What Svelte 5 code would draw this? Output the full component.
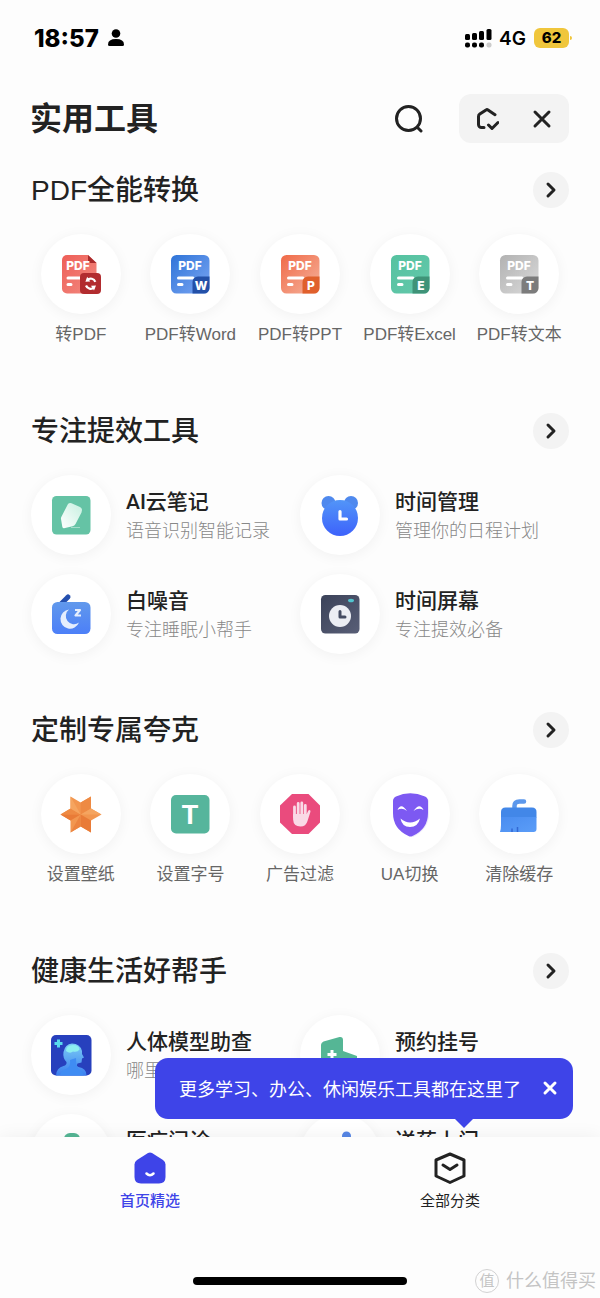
<script lang="ts">
  type Tool = { icon: string; name: string; desc?: string };
  type Section = { title: string; layout: "grid" | "list"; tools: Tool[] };

  const sections: Section[] = [
    {
      title: "PDF全能转换",
      layout: "grid",
      tools: [
        { icon: "pdf", name: "转PDF" },
        { icon: "word", name: "PDF转Word" },
        { icon: "ppt", name: "PDF转PPT" },
        { icon: "excel", name: "PDF转Excel" },
        { icon: "txt", name: "PDF转文本" },
      ],
    },
    {
      title: "专注提效工具",
      layout: "list",
      tools: [
        { icon: "note", name: "AI云笔记", desc: "语音识别智能记录" },
        { icon: "bear", name: "时间管理", desc: "管理你的日程计划" },
        { icon: "noise", name: "白噪音", desc: "专注睡眠小帮手" },
        { icon: "screen", name: "时间屏幕", desc: "专注提效必备" },
      ],
    },
    {
      title: "定制专属夸克",
      layout: "grid",
      tools: [
        { icon: "star", name: "设置壁纸" },
        { icon: "font", name: "设置字号" },
        { icon: "stop", name: "广告过滤" },
        { icon: "mask", name: "UA切换" },
        { icon: "broom", name: "清除缓存" },
      ],
    },
    {
      title: "健康生活好帮手",
      layout: "list",
      tools: [
        { icon: "body", name: "人体模型助查", desc: "哪里" },
        { icon: "clinic", name: "预约挂号" },
        { icon: "doctor", name: "医疗问诊" },
        { icon: "delivery", name: "送药上门" },
      ],
    },
  ];

  // from / to: page gradient, badge: corner colour
  const docs: Record<string, { from: string; to: string; badge: string; letter: string }> = {
    word: { from: "#2f74d8", to: "#7ba6f3", badge: "#2350a8", letter: "W" },
    ppt: { from: "#f06a48", to: "#f5b39c", badge: "#e0602c", letter: "P" },
    excel: { from: "#55c2a0", to: "#64c8ab", badge: "#3f9378", letter: "E" },
    txt: { from: "#b2b2b2", to: "#dadada", badge: "#7c7c7c", letter: "T" },
  };

  let tipOpen = true;
</script>

{#snippet glyph(name: string)}
  <svg class="glyph" viewBox="0 0 40 40" aria-hidden="true">
    {#if docs[name]}
      {@const doc = docs[name]}
      <linearGradient id={`g-${name}`} x1="0" y1="0" x2="1" y2="1">
        <stop offset="0" stop-color={doc.from} />
        <stop offset="1" stop-color={doc.to} />
      </linearGradient>
      <rect x="1" y="1" width="38.5" height="38.5" rx="5.5" fill={`url(#g-${name})`} />
      <text class="doc-text" x="20" y="16">PDF</text>
      <path d="M8.5 24H23M8.500 30.5h3.5" stroke="#fff" stroke-width="3" stroke-linecap="round" />
      <path d="M28 22.5h11.5V34a5.5 5.5 0 0 1-5.5 5.5H22.5V28a5.5 5.5 0 0 1 5.5-5.5z" fill={doc.badge} />
      <text class="doc-letter" x="31" y="35.5">{doc.letter}</text>
    {:else if name === "pdf"}
      <linearGradient id="g-pdf" x1="0" y1="0" x2="1" y2="1">
        <stop offset="0" stop-color="#ee5f58" />
        <stop offset="1" stop-color="#f28a80" />
      </linearGradient>
      <path d="M6 1h21l8.5 8v30.5H6a5 5 0 0 1-5-5V6a5 5 0 0 1 5-5z" fill="url(#g-pdf)" />
      <path d="M27 1v5.5a2.5 2.5 0 0 0 2.5 2.5h6z" fill="#a82a2c" />
      <text class="doc-text" x="17" y="16">PDF</text>
      <path d="M7 24h12M7 30.5h3" stroke="#fff" stroke-width="3" stroke-linecap="round" />
      <rect x="19" y="19" width="21" height="21" rx="4" fill="#b22c2f" />
      <path d="M25 31.5a5 5 0 0 0 8 2M34.3 27.8a5 5 0 0 0-8-2" fill="none" stroke="#fff" stroke-width="2.2" />
      <path d="M26.2 22.8l-1.8 5 4.800-.2zM33 36.500l2-5-5 .2z" fill="#fff" />
    {:else if name === "note"}
      <linearGradient id="g-note" x1="0" y1="1" x2="1" y2="0">
        <stop offset="0" stop-color="#fff" />
        <stop offset="1" stop-color="#c6f0e0" />
      </linearGradient>
      <rect x="1" y="1" width="38.5" height="38.5" rx="4.5" fill="#65c3a5" />
      <path d="M20 32.5h9" stroke="#a3dcc9" stroke-width="1" />
      <path d="M17 9q1.500-1.5 3.500-.7l8.500 3.700q2 1 2 3l-.5 2.500-6 11.500q-1 2-3 2.300l-8.500 1.900q-1.500.2-1.700-1.400L10 24q-.2-1 .3-2z" fill="url(#g-note)" />
    {:else if name === "bear"}
      <linearGradient id="g-bear" x1="0" y1="0" x2="0" y2="1">
        <stop offset="0" stop-color="#5295f8" />
        <stop offset="1" stop-color="#3d62fb" />
      </linearGradient>
      <circle cx="8.5" cy="8" r="7" fill="#4f89ee" />
      <circle cx="31" cy="8" r="7" fill="#4f89ee" />
      <circle cx="20" cy="23" r="18" fill="url(#g-bear)" />
      <path d="M20 16.5v7.5h6.5" fill="none" stroke="#fff" stroke-width="3.2" stroke-linecap="round" stroke-linejoin="round" />
    {:else if name === "noise"}
      <linearGradient id="g-noise" x1="0" y1="0" x2="0" y2="1">
        <stop offset="0" stop-color="#6199ec" />
        <stop offset="1" stop-color="#4c7ff8" />
      </linearGradient>
      <path d="M11 9l6-6" stroke="#244fae" stroke-width="5" stroke-linecap="round" />
      <rect x="1" y="8" width="38.5" height="32" rx="5.5" fill="url(#g-noise)" />
      <path d="M18 15.5A9.600 9.600 0 1 0 28 28.500a8 8 0 0 1-10-13z" fill="#e5eefd" />
      <path d="M24 16h5l-4.500 5.500h5.500" fill="none" stroke="#e5eefd" stroke-width="2.2" stroke-linejoin="round" />
    {:else if name === "screen"}
      <linearGradient id="g-screen" x1="0" y1="0" x2="1" y2="1">
        <stop offset="0" stop-color="#3b4259" />
        <stop offset="1" stop-color="#595f77" />
      </linearGradient>
      <rect x="1" y="1" width="38.5" height="38.5" rx="4.5" fill="url(#g-screen)" />
      <ellipse cx="31" cy="6.5" rx="3" ry="1.8" fill="#52c4cf" />
      <circle cx="20" cy="22" r="11" fill="#eceef4" />
      <path d="M20 17.5V23h5" fill="none" stroke="#454c63" stroke-width="3" stroke-linecap="round" stroke-linejoin="round" />
    {:else if name === "star"}
      <path d="M9.500 2.500l10.200 6 10.300-6v12l10.500 6-10.500 6v12l-10.300-6-10.200 6v-12l-10-6 10-6z" fill="#f2964f" />
      <path d="M9.500 14.500l10.200 6-20.200 0zM30 2.500v12l-10.300 6v-12z" fill="#ee8a43" />
      <path d="M9.500 26.500l10.200-6-20.200 0zM19.700 20.500v12l10.300 6v-12z" fill="#e97b37" />
      <path d="M19.700 20.500h20.800l-10.500-6zM9.500 2.500v12l10.200 6z" fill="#f5a45f" />
      <path d="M19.700 20.500v12l-10.200 6z" fill="#ec8440" />
    {:else if name === "font"}
      <rect x="1" y="1" width="38.5" height="38.5" rx="5" fill="#56b59c" />
      <text class="font-letter" x="20" y="30">T</text>
    {:else if name === "stop"}
      <path d="M12 0h16.500L40 11.500v17L28.500 40H12L0 28.500v-17z" fill="#ea4b7d" />
      <path d="M14.500 13v10M18.200 9.500V22M21.800 9V22M25.300 11.500V23" stroke="#fad9e6" stroke-width="2.8" stroke-linecap="round" />
      <path d="M13.100 20h13.600l1.400-3q1-1.600 2.200-.6.400.6 0 1.800l-2.800 8.800q-1.500 5.500-7 5.500-7 0-7.400-7z" fill="#fad9e6" />
    {:else if name === "mask"}
      <path d="M7 4Q20-1 36 4q3 .8 3 4v12q0 15-16 23Q6 36 5 20z" fill="#ece8fb" />
      <path d="M3 7q0-3 3-4.500Q20-4 35 2.500 38 4 38 7v12q0 16-15.500 23-2 1-4 0Q3 35 3 19z" fill="#7d59f2" />
      <path d="M10.500 24.500q9.500 8 19.500 0-2 8.500-10 8.500t-9.500-8.500z" fill="#fff" />
      <path d="M7.500 16q3.500-8 9.500 1-5-4-9.500-1zM33.500 16q-4-8-10 1 5-4 10-1z" fill="#fff" />
    {:else if name === "broom"}
      <linearGradient id="g-broom" x1="0" y1="0" x2="1" y2="1">
        <stop offset="0" stop-color="#4a8df0" />
        <stop offset="1" stop-color="#5b9df8" />
      </linearGradient>
      <path d="M15.500 15v-3q0-4.500 5-4.500H25" fill="none" stroke="#5c98ec" stroke-width="4.5" stroke-linecap="round" />
      <path d="M2 23.500V18q0-4.500 4.500-4.500h26.500q4.500 0 4.500 4.500v5.500z" fill="#4287e8" />
      <path d="M2 23h35.500v12q0 3-3 3H1q1-3 1-7z" fill="url(#g-broom)" />
      <path d="M13 38v-3.500M18.500 38v-5" stroke="#3268d4" stroke-width="1.5" />
    {:else if name === "body"}
      <linearGradient id="g-body" x1="0" y1="0" x2="0" y2="1">
        <stop offset="0" stop-color="#7ccdf5" />
        <stop offset="1" stop-color="#3b7ff0" />
      </linearGradient>
      <rect width="40.5" height="40.5" rx="5" fill="#2740bd" />
      <path d="M5 40.500q.5-8 7.500-9.500 3.500-1 3-4-4-4-3-10Q14 9 21 8.500q8 0 10 7.500l0 3 2 3.500-2 1-.5 4-4 1q-1.500 2.500 1 3.500 8 1 8 8.500z" fill="url(#g-body)" />
      <path d="M9 40.500q1-5 6-6.500 5-2 4-9l6-2q0 9 3 11t5 6.500z" fill="#3f8cf3" />
      <path d="M15 16q0-6 7-6 6 0 6.500 4.500-2 3-6.500 2-3 2.500-7-.5z" fill="#8deef0" />
      <path d="M7.500 4.500v8M3.500 8.500h8" stroke="#58d9ee" stroke-width="3" />
    {:else if name === "clinic"}
      <path d="M1 10q0-2.500 2.500-3.500l16-4.500Q23 1.500 23 5v11l14 5v16q0 3-3 3H4q-3 0-3-3z" fill="#55b695" />
      <path d="M12 15v9M7.500 19.500h9" stroke="#fff" stroke-width="3" />
    {:else if name === "doctor"}
      <rect x="13" y="-1" width="16" height="20" rx="6" fill="#55b695" />
      <rect x="5" y="16" width="30" height="24" rx="8" fill="#6bc6a8" />
    {:else if name === "delivery"}
      <circle cx="26.5" cy="2" r="4.5" fill="#5787e6" />
      <path d="M18 8l14-2 5 34H8z" fill="#6d9cf5" />
    {/if}
  </svg>
{/snippet}

<div class="app">
  <div class="status">
    <span class="clock">18:57</span>
    <svg width="16" height="18" viewBox="0 0 16 18">
      <circle cx="8" cy="4.5" r="4.300" />
      <path d="M0 15.500q0-5.500 8-5.500t8 5.500q0 1.500-1.500 1.500h-13Q0 17 0 15.500z" />
    </svg>
    <svg class="signal" width="27" height="20" viewBox="0 0 27 20">
      <rect x="0" y="6" width="5" height="6" rx="1.5" />
      <rect x="7" y="5" width="5" height="7" rx="1.5" />
      <rect x="14" y="3" width="5" height="9" rx="1.5" />
      <rect x="21.5" y="1" width="5" height="11" rx="1.5" />
      <rect x="0" y="14.5" width="5" height="5" rx="2" />
      <rect x="7" y="14.5" width="5" height="5" rx="2" />
      <rect x="14" y="14.5" width="5" height="5" rx="2" />
      <rect x="21.5" y="14.5" width="5" height="5" rx="2" fill="#ccc" />
    </svg>
    <span class="network">4G</span>
    <span class="battery">62</span>
  </div>

  <header>
    <h1>实用工具</h1>
    <button class="search" aria-label="搜索">
      <svg width="28" height="28" viewBox="0 0 28 28">
        <circle cx="13.5" cy="13.5" r="12" />
        <path d="M22.500 22.500l3.500 3.500" />
      </svg>
    </button>
    <div class="capsule">
      <button aria-label="添加到首页">
        <svg width="24" height="24" viewBox="0 0 24 24">
          <path d="M9 20.500H6.500a3 3 0 0 1-3-3V9.500q0-1.500 1.300-2.400L11 3q1-.7 2 0l7 4.700M13.500 18l3.500 3.500 6-6" />
        </svg>
      </button>
      <button aria-label="关闭">
        <svg width="24" height="24" viewBox="0 0 24 24"><path d="M5 5l14 14M19 5L5 19" /></svg>
      </button>
    </div>
  </header>

  <main>
    {#each sections as section}
      <section>
        <div class="section-head">
          <h2>{section.title}</h2>
          <button class="more" aria-label={section.title}>
            <svg width="20" height="20" viewBox="0 0 20 20"><path d="M7 4l6 6-6 6" /></svg>
          </button>
        </div>
        <div class={section.layout}>
          {#each section.tools as tool}
            <a class="tool" href="#{tool.icon}">
              <span class="disc">{@render glyph(tool.icon)}</span>
              {#if section.layout === "list"}
                <span class="text">
                  <span class="name">{tool.name}</span>
                  {#if tool.desc}<span class="desc">{tool.desc}</span>{/if}
                </span>
              {:else}
                <span class="label">{tool.name}</span>
              {/if}
            </a>
          {/each}
        </div>
      </section>
    {/each}
  </main>

  <footer>
    {#if tipOpen}
      <div class="tip">
        <span>更多学习、办公、休闲娱乐工具都在这里了</span>
        <button aria-label="关闭提示" on:click={() => (tipOpen = false)}>
          <svg width="16" height="16" viewBox="0 0 16 16"><path d="M3 3l10 10M13 3L3 13" /></svg>
        </button>
      </div>
    {/if}
    <nav>
      <a class="active" href="#home">
        <svg width="34" height="34" viewBox="0 0 34 34">
          <path d="M15 2q2-1.200 4 0l11 7q2.500 1.700 2.500 4.500V26q0 6.500-6.500 6.500H8q-6.500 0-6.500-6.500V13.500Q1.500 10.700 4 9z" fill="currentColor" />
          <path d="M13.500 22.500q3.500 3.500 7 0" fill="none" stroke="#fff" stroke-width="2.5" stroke-linecap="round" />
        </svg>
        <span>首页精选</span>
      </a>
      <a href="#all">
        <svg width="34" height="34" viewBox="0 0 34 34" fill="none" stroke="currentColor" stroke-width="3" stroke-linecap="round" stroke-linejoin="round">
          <path d="M17 3l14 6v16l-14 6.500L3 25V9z" />
          <path d="M10 14l7 4.500 7-4.500" />
        </svg>
        <span>全部分类</span>
      </a>
    </nav>
    <div class="home-bar"></div>
    <div class="watermark"><span class="seal">值</span>什么值得买</div>
  </footer>
</div>

<style>
  :global(body) {
    background: #fdfdfd;
  }
  .app {
    display: flex;
    flex-direction: column;
    height: 100vh;
    overflow: hidden;
    color: #222;
    font-family: "Liberation Sans", "Noto Sans CJK SC", sans-serif;
  }
  h1,
  h2 {
    margin: 0;
  }
  a {
    color: inherit;
    text-decoration: none;
  }
  button {
    display: grid;
    place-items: center;
    padding: 0;
    border: 0;
    background: none;
    color: inherit;
    cursor: pointer;
  }
  button svg {
    fill: none;
    stroke: currentColor;
    stroke-width: 3;
    stroke-linecap: round;
    stroke-linejoin: round;
  }

  .status {
    display: flex;
    align-items: center;
    flex: none;
    height: 76px;
    padding: 0 31px 0 34px;
    color: #000;
    font-family: Inter, sans-serif;
  }
  .clock {
    margin-right: 9px;
    font-size: 24px;
    font-weight: 800;
  }
  .signal {
    margin-left: auto;
  }
  .network {
    margin: 0 8px 0 7px;
    font-size: 19px;
    font-weight: 600;
  }
  .battery {
    position: relative;
    width: 35px;
    border-radius: 6px;
    background: #f0c63c;
    font-size: 15px;
    font-weight: 800;
    line-height: 20px;
    text-align: center;
  }
  .battery::after {
    content: "";
    position: absolute;
    top: 8px;
    right: -3px;
    width: 2px;
    height: 4px;
    border-radius: 0 2px 2px 0;
    background: #f0c63c;
  }

  header {
    display: flex;
    align-items: center;
    flex: none;
    padding: 18px 31px 29px 30px;
  }
  h1 {
    flex: 1;
    font-size: 32px;
    font-weight: 700;
    line-height: 48px;
  }
  .search {
    margin-right: 36px;
  }
  .capsule {
    display: flex;
    width: 110px;
    height: 49px;
    border-radius: 12px;
    background: #f3f3f3;
  }
  .capsule button {
    flex: 1;
  }

  main {
    flex: 1;
    min-height: 0;
    overflow: hidden;
  }
  section {
    margin-bottom: 58px;
  }
  .section-head {
    display: flex;
    align-items: center;
    justify-content: space-between;
    height: 36px;
    margin-bottom: 26px;
    padding: 0 31px;
  }
  h2 {
    padding-top: 2px;
    font-size: 28px;
    font-weight: 500;
    line-height: 36px;
  }
  .more {
    width: 36px;
    height: 36px;
    border-radius: 50%;
    background: #f3f3f3;
  }

  .grid {
    display: grid;
    grid-template-columns: repeat(5, 1fr);
    padding: 0 26px 8px;
  }
  .grid .tool {
    display: flex;
    flex-direction: column;
    align-items: center;
    gap: 9px;
  }
  .list {
    display: grid;
    grid-template-columns: 1fr 1fr;
    row-gap: 19px;
    padding: 0 31px;
  }
  .list .tool {
    display: flex;
    align-items: center;
    gap: 15px;
  }
  .disc {
    display: grid;
    place-items: center;
    flex: none;
    width: 80px;
    height: 80px;
    border-radius: 50%;
    background: #fff;
    box-shadow: 0 2px 14px rgba(0, 0, 0, 0.05);
  }
  .glyph {
    width: 40px;
    height: 40px;
    overflow: visible;
  }
  .glyph text {
    fill: #fff;
    font-weight: 700;
    text-anchor: middle;
  }
  .glyph .doc-text,
  .glyph .doc-letter {
    font-family: Inter, sans-serif;
    font-size: 12px;
    font-weight: 800;
  }
  .font-letter {
    font-size: 27px;
  }
  .label {
    color: #666;
    font-size: 17px;
    line-height: 24px;
    white-space: nowrap;
  }
  .text {
    display: flex;
    flex-direction: column;
    min-height: 58px;
    padding-top: 2px;
    white-space: nowrap;
  }
  .name {
    font-family: Roboto, "Noto Sans CJK SC", sans-serif;
    font-size: 21px;
    font-weight: 500;
    line-height: 30px;
  }
  .desc {
    color: #888;
    font-size: 18px;
    font-weight: 300;
    line-height: 28px;
  }

  footer {
    position: relative;
    flex: none;
    background: #fdfdfd;
    box-shadow: 0 0 18px rgba(0, 0, 0, 0.06);
  }
  .tip {
    position: absolute;
    right: 27px;
    bottom: calc(100% + 18px);
    display: flex;
    align-items: center;
    gap: 21px;
    box-sizing: border-box;
    height: 61px;
    padding: 0 15px 2px 24px;
    border-radius: 13px;
    background: #3e44e8;
    color: #fff;
    font-size: 18px;
    white-space: nowrap;
  }
  .tip::after {
    content: "";
    position: absolute;
    top: 100%;
    right: 100px;
    border: 9px solid transparent;
    border-top-color: #3e44e8;
    border-bottom: 0;
  }
  nav {
    display: grid;
    grid-template-columns: 1fr 1fr;
    padding: 14px 0 64px;
  }
  nav a {
    display: flex;
    flex-direction: column;
    align-items: center;
    gap: 4px;
    font-size: 15px;
    line-height: 24px;
  }
  nav .active {
    color: #3e44e8;
    font-weight: 500;
  }
  .home-bar {
    width: 214px;
    height: 8px;
    margin: 0 auto 13px;
    border-radius: 4px;
    background: #000;
  }
  .watermark {
    position: absolute;
    right: 4px;
    bottom: 5px;
    display: flex;
    align-items: center;
    gap: 7px;
    color: #c4c4c4;
    font-size: 18px;
    line-height: 24px;
  }
  .seal {
    width: 22px;
    border: 1px solid #d2d2d2;
    border-radius: 50%;
    font-size: 15px;
    line-height: 22px;
    text-align: center;
  }
</style>
